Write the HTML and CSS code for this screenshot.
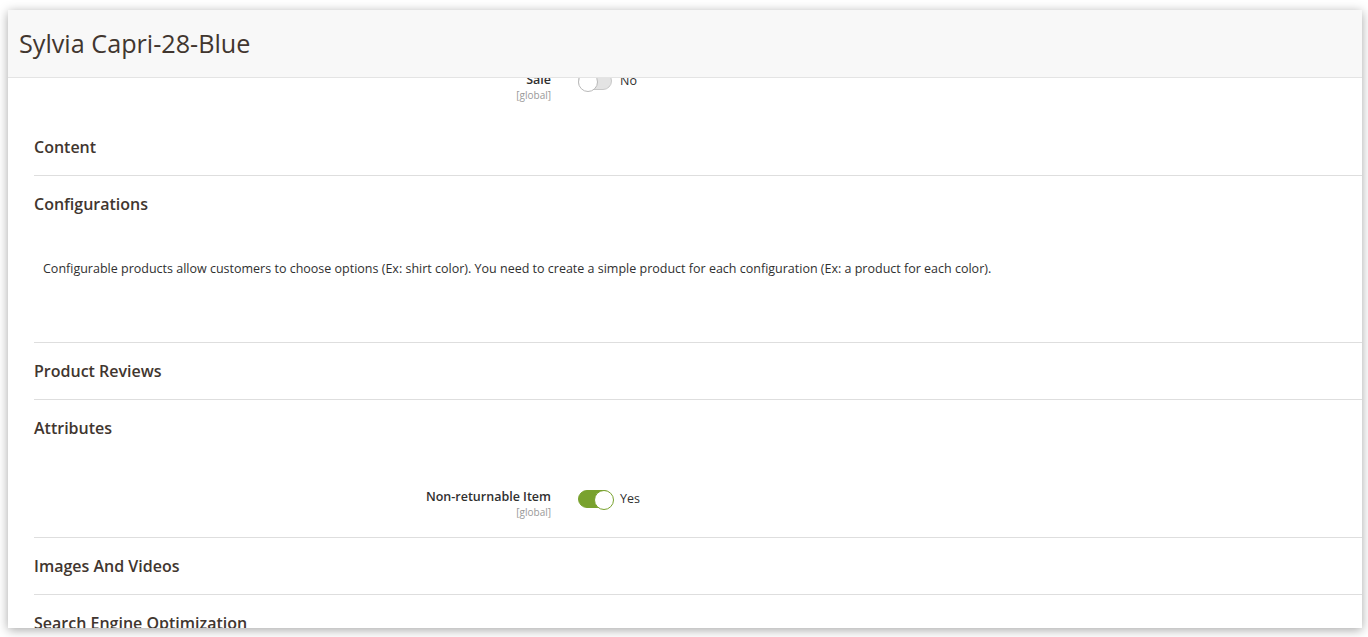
FILE: index.html
```html
<!DOCTYPE html>
<html lang="en">
<head>
    <meta charset="UTF-8">
    <meta name="viewport" content="width=device-width, initial-scale=1.0">
    <title>Sylvia Capri-28-Blue</title>
    <link rel="stylesheet" href="styles.css">
</head>
<body>
    <div class="modal">
        <header class="modalHeader">
            <h1 class="modalTitle">Sylvia Capri-28-Blue</h1>
        </header>

        <div class="modalContent">
            <div class="field fieldTop">
                <div class="fieldLabel">
                    <span class="labelText">Sale</span>
                    <span class="scope">[global]</span>
                </div>
                <div class="fieldControl">
                    <span class="switch"></span>
                    <span class="switchText">No</span>
                </div>
            </div>

            <section class="fieldset">
                <div class="fieldsetTitle">Content</div>
            </section>

            <section class="fieldset">
                <div class="fieldsetTitle">Configurations</div>
                <p class="fieldsetNote">Configurable products allow customers to choose options (Ex: shirt color). You need to create a simple product for each configuration (Ex: a product for each color).</p>
            </section>

            <section class="fieldset">
                <div class="fieldsetTitle">Product Reviews</div>
            </section>

            <section class="fieldset">
                <div class="fieldsetTitle">Attributes</div>
                <div class="field fieldAttr">
                    <div class="fieldLabel">
                        <span class="labelText">Non-returnable Item</span>
                        <span class="scope">[global]</span>
                    </div>
                    <div class="fieldControl">
                        <span class="switch on"></span>
                        <span class="switchText">Yes</span>
                    </div>
                </div>
            </section>

            <section class="fieldset">
                <div class="fieldsetTitle">Images And Videos</div>
            </section>

            <section class="fieldset">
                <div class="fieldsetTitle">Search Engine Optimization</div>
            </section>
        </div>
    </div>
</body>
</html>
```

FILE: styles.css
```css
* {
    margin: 0;
    padding: 0;
    box-sizing: border-box;
}

body {
    background: #ffffff;
    font-family: "Open Sans", "Liberation Sans", sans-serif;
    color: #303030;
    padding: 10px 6px 0 8px;
    height: 100vh;
    overflow: hidden;
}

.modal {
    height: 618px;
    display: flex;
    flex-direction: column;
    background: #ffffff;
    box-shadow: 0 2px 10px rgba(0, 0, 0, 0.35);
}

.modalHeader {
    height: 68px;
    padding: 17px 0 0 11px;
    background: #f8f8f8;
    border-bottom: 1px solid #e4e4e4;
    position: relative;
    z-index: 1;
}

.modalTitle {
    font-size: 25.2px;
    line-height: 32px;
    font-weight: 400;
    color: #41362f;
}

.modalContent {
    flex: 1;
    overflow: hidden;
    padding-left: 26px;
}

/* fields */
.field {
    display: flex;
    align-items: flex-start;
    gap: 27px;
}

.fieldTop {
    margin-top: -6px;
    margin-bottom: 17px;
}

.fieldTop .fieldControl {
    margin-top: 0;
}

.fieldAttr {
    padding: 33px 0 18px;
}

.fieldLabel {
    width: 517px;
    display: flex;
    flex-direction: column;
    align-items: flex-end;
}

.labelText {
    font-size: 12.5px;
    line-height: 16px;
    font-weight: 600;
    color: #303030;
}

.scope {
    font-size: 10px;
    line-height: 14px;
    color: #999999;
}

.fieldControl {
    display: flex;
    align-items: center;
    gap: 8px;
    margin-top: 1px;
}

.switch {
    position: relative;
    display: block;
    width: 34px;
    height: 18px;
    border-radius: 9px;
    background: #e3e3e3;
    border: 1px solid #c8c8c8;
}

.switch::after {
    content: "";
    position: absolute;
    top: -1px;
    left: -1px;
    width: 18px;
    height: 18px;
    border-radius: 50%;
    background: #ffffff;
    border: 1px solid #b9b9b9;
}

.switch.on {
    background: #79a22e;
    border-color: #79a22e;
}

.switch.on::after {
    left: 15px;
    border-color: #79a22e;
}

.switchText {
    font-size: 12.5px;
    line-height: 16px;
    color: #303030;
}

/* collapsible sections */
.fieldset {
    border-bottom: 1px solid #dedede;
}

.fieldsetTitle {
    padding: 18px 0;
    font-size: 16px;
    line-height: 20px;
    font-weight: 600;
    color: #41362f;
}

.fieldsetNote {
    padding: 28px 0 64px 9px;
    font-size: 12.5px;
    line-height: 18px;
    color: #303030;
}
```
